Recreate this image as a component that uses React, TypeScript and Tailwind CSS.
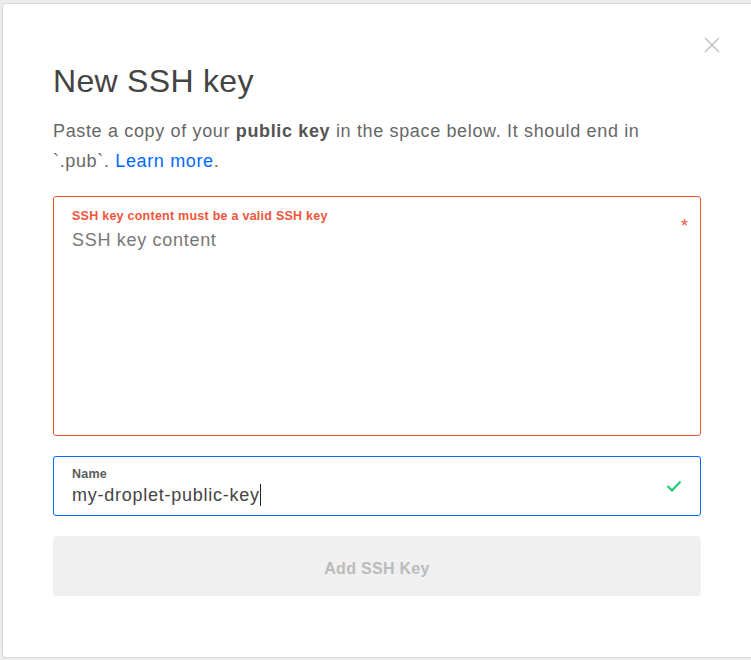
import React from 'react';

export default function App() {
  return (
    <div className="w-[751px] h-[660px] bg-[#ececec] overflow-hidden pl-[2px] pt-[3px]" style={{ fontFamily: '"Liberation Sans", Arial, sans-serif' }}>
      <div className="relative w-[760px] h-[655px] bg-white border border-[#d8d8d8] rounded-[4px] pl-[50px] pr-[58px]">
        <button type="button" className="absolute left-[699px] top-[31px] w-[20px] h-[20px] text-[#c4c4c4]">
          <svg viewBox="0 0 20 20" width="20" height="20" fill="none" stroke="currentColor" strokeWidth="1.5">
            <path d="M3 3 L17 17 M17 3 L3 17" />
          </svg>
        </button>
        <h1 className="pt-[57px] text-[32px] leading-[40px] text-[#444] tracking-[0.3px]">New SSH key</h1>
        <p className="mt-[15px] text-[18px] leading-[30px] text-[#676767] tracking-[0.65px]">
          Paste a copy of your <b className="font-bold text-[#555]">public key</b> in the space below. It should end in
          <br />
          `.pub`. <span className="text-[#0069ff]">Learn more</span>.
        </p>
        <div className="relative mt-[20px] w-[648px] h-[240px] border border-[#f0553a] rounded-[3px] px-[18px] pt-[11px]">
          <div className="text-[12.5px] leading-[16px] font-bold text-[#f0553a] tracking-[0.25px]">SSH key content must be a valid SSH key</div>
          <div className="mt-[4px] text-[18px] leading-[24px] text-[#777] tracking-[0.7px]">SSH key content</div>
          <span className="absolute right-[12px] top-[20px] text-[18px] leading-[18px] text-[#f0553a]">*</span>
        </div>
        <div className="relative mt-[20px] w-[648px] h-[60px] border border-[#0069ff] rounded-[3px] px-[18px] pt-[9px]">
          <div className="text-[12.5px] leading-[16px] font-bold text-[#5b5b5b] tracking-[0.25px]">Name</div>
          <div className="mt-[1px] text-[18px] leading-[24px] text-[#444] flex items-center tracking-[0.75px]">
            my-droplet-public-key<span className="inline-block w-px h-[22px] bg-[#222]" />
          </div>
          <svg className="absolute right-[18px] top-[22px]" width="16" height="14" viewBox="0 0 16 14" fill="none" stroke="#15cd72" strokeWidth="2">
            <path d="M1.5 7 L6 11.5 L14.5 2.5" />
          </svg>
        </div>
        <button type="button" className="mt-[20px] w-[648px] h-[60px] pt-[5px] bg-[#f0f0f0] rounded-[4px] text-[16px] font-bold text-[#bbb] tracking-[0.3px]">
          Add SSH Key
        </button>
      </div>
    </div>
  );
}
